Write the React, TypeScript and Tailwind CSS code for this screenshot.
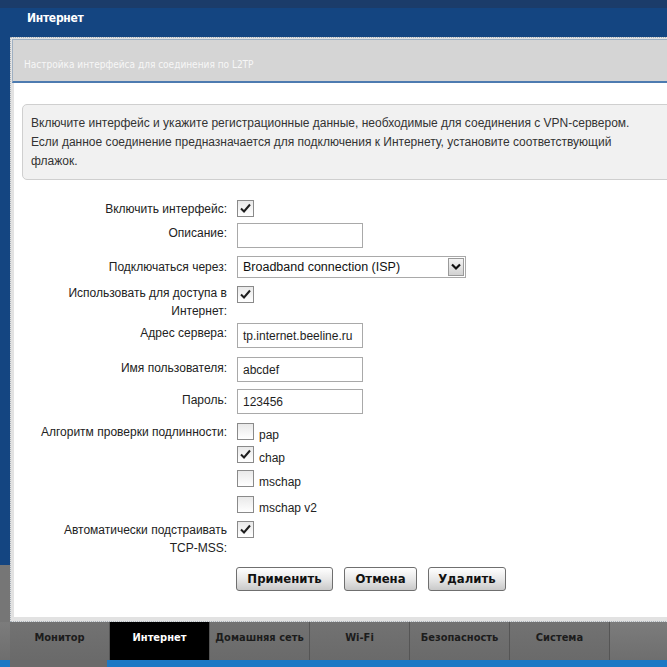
import React from 'react';

const sans = "font-['Liberation_Sans',Arial,sans-serif]";
const cond = "font-['DejaVu_Sans_Condensed','Liberation_Sans',sans-serif] [font-stretch:condensed]";

function Check({ checked }: { checked?: boolean }) {
  return (
    <div className="w-[17px] h-[17px] border border-[#8a8a8a] bg-[linear-gradient(#e9e9e9,#ffffff)] flex items-center justify-center shrink-0">
      {checked && (
        <svg width="13" height="13" viewBox="0 0 13 13">
          <path d="M2 6.5 L5 9.5 L11 2.5" fill="none" stroke="#1e1e1e" strokeWidth="2" />
        </svg>
      )}
    </div>
  );
}

function Field({ value, w = 'w-[126px]' }: { value?: string; w?: string }) {
  return (
    <div className={`${w} h-[25px] border border-[#a9a9a9] bg-white flex items-center pl-[5px] text-[12px] text-[#1e1e1e] ${sans}`}>
      {value}
    </div>
  );
}

function Row({ h, label, pt = 'pt-0', children }: { h: string; label: React.ReactNode; pt?: string; children: React.ReactNode }) {
  return (
    <div className={`grid grid-cols-[213px_1fr] gap-x-[10px] ${h}`}>
      <div className={`text-right text-[12px] leading-[18px] text-[#222] ${sans} ${pt}`}>{label}</div>
      <div>{children}</div>
    </div>
  );
}

function AuthOpt({ checked, label }: { checked?: boolean; label: string }) {
  return (
    <div className="flex items-end gap-[5px]">
      <Check checked={checked} />
      <span className={`text-[12px] leading-[14px] text-[#222] ${sans} -mb-[2px]`}>{label}</span>
    </div>
  );
}

function Btn({ w, children }: { w: string; children: React.ReactNode }) {
  return (
    <div className={`${w} h-[24px] border border-[#6f6f6f] rounded-[3px] bg-[linear-gradient(#ffffff,#e8e8e8_50%,#c9c9c9)] flex items-center justify-center text-[13px] font-bold text-[#111] ${cond}`}>
      {children}
    </div>
  );
}

const tabs = ['Монитор', 'Интернет', 'Домашняя сеть', 'Wi-Fi', 'Безопасность', 'Система'];

export default function App() {
  return (
    <div className="w-[667px] h-[667px] overflow-hidden flex flex-col bg-[linear-gradient(#1b3c6a_0,#1b3c6a_8px,#144581_8px,#144581_565px,#767676_565px)]">
      {/* Top title */}
      <div className="h-[37px] shrink-0 pt-[11px] pl-[27px]">
        <div className={`text-[12px] leading-[14px] font-bold tracking-[-0.3px] text-white ${cond}`}>Интернет</div>
      </div>

      {/* Main panel */}
      <div className="ml-[10px] w-[700px] h-[585px] shrink-0 border border-dotted border-[#a8b0b8] bg-[#e2e2e2] flex flex-col">
        <div className="h-[44px] shrink-0 mx-[1px] mt-[1px] bg-[#d5d5d5] border border-[#9fb0c2] border-b-[2px] border-b-[#4d7bb0] pl-[11px] pt-[19px]">
          <div className={`text-[10px] leading-[12px] text-[#f7f7f7] ${cond}`}>Настройка интерфейса для соединения по L2TP</div>
        </div>
        <div className="flex-1 ml-[3px] mb-[4px] bg-white pt-[21px] pl-[8px]">
          <div className="h-[76px] border border-[#cfcfcf] rounded-[5px] bg-[#f1f1f1] pl-[8px] pt-[9px]">
            <p className={`text-[12px] leading-[19px] text-[#333] ${sans}`}>
              Включите интерфейс и укажите регистрационные данные, необходимые для соединения с VPN-сервером.
              <br />
              Если данное соединение предназначается для подключения к Интернету, установите соответствующий
              <br />
              флажок.
            </p>
          </div>

          <div className="mt-[20px] -ml-[8px] flex flex-col">
            <Row h="h-[23px]" label="Включить интерфейс:">
              <Check checked />
            </Row>
            <Row h="h-[33px]" label="Описание:" pt="pt-[1px]">
              <Field />
            </Row>
            <Row h="h-[30px]" label="Подключаться через:" pt="pt-[2px]">
              <div className={`w-[229px] h-[22px] border border-[#a9a9a9] bg-white flex items-center justify-between pl-[5px] pr-[1px] text-[12.5px] text-[#111] ${sans}`}>
                <span>Broadband connection (ISP)</span>
                <div className="w-[16px] h-[18px] border border-[#9a9a9a] bg-[linear-gradient(#f4f4f4,#d2d2d2)] flex items-center justify-center">
                  <svg width="10" height="8" viewBox="0 0 10 8">
                    <path d="M1 1.5 L5 5.5 L9 1.5" fill="none" stroke="#111" strokeWidth="2.2" />
                  </svg>
                </div>
              </div>
            </Row>
            <Row h="h-[37px]" label={<>Использовать для доступа в<br />Интернет:</>} pt="-mt-[2px]">
              <Check checked />
            </Row>
            <Row h="h-[34px]" label="Адрес сервера:" pt="pt-[1px]">
              <Field value="tp.internet.beeline.ru" />
            </Row>
            <Row h="h-[32px]" label="Имя пользователя:" pt="pt-[2px]">
              <Field value="abcdef" />
            </Row>
            <Row h="h-[34px]" label="Пароль:" pt="pt-[2px]">
              <Field value="123456" />
            </Row>
            <Row h="h-[23px]" label="Алгоритм проверки подлинности:">
              <AuthOpt label="pap" />
            </Row>
            <Row h="h-[24px]" label="">
              <AuthOpt checked label="chap" />
            </Row>
            <Row h="h-[26px]" label="">
              <AuthOpt label="mschap" />
            </Row>
            <Row h="h-[25px]" label="">
              <AuthOpt label="mschap v2" />
            </Row>
            <Row h="h-[46px]" label={<>Автоматически подстраивать<br />TCP-MSS:</>}>
              <Check checked />
            </Row>
            <div className="pl-[222px] flex gap-[11px]">
              <Btn w="w-[97px]">Применить</Btn>
              <Btn w="w-[73px]">Отмена</Btn>
              <Btn w="w-[78px]">Удалить</Btn>
            </div>
          </div>
        </div>
      </div>

      {/* Bottom nav */}
      <div className="h-[38px] shrink-0 flex pl-[10px] bg-[linear-gradient(#7c7c7c,#6e6e6e)]">
        {tabs.map((t) => (
          <div
            key={t}
            className={`w-[100px] border-r border-[#555] flex justify-center pt-[8px] text-[11px] font-bold ${cond} ${
              t === 'Интернет' ? 'bg-black text-white' : 'text-[#1c1c1c] bg-[linear-gradient(#727272,#6a6a6a)]'
            }`}
          >
            {t}
          </div>
        ))}
      </div>
      <div className="h-[7px] shrink-0 flex bg-[#1b78c4]">
        <div className="w-[10px]" />
        <div className="w-[97px] bg-[#6a6a6a]" />
      </div>
    </div>
  );
}
